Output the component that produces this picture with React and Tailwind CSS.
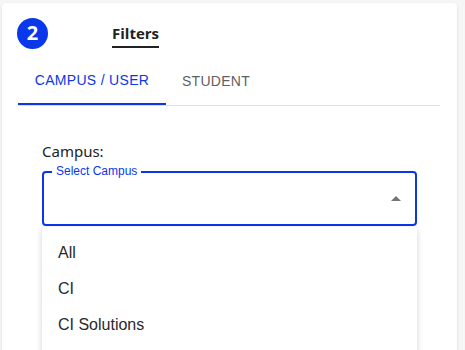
import React from 'react'

const BLUE = 'text-[#0a37ea]'

const options = ['All', 'CI', 'CI Solutions']

export default function App() {
  return (
    <div className="min-h-[350px] bg-[#f6f6f6] pt-[3px] pl-[2px] overflow-hidden">
      <div className="w-[455px] h-[400px] bg-white rounded-[4px] shadow-[0_1px_3px_rgba(0,0,0,0.12)] relative">
        {/* header */}
        <div className="flex items-center pt-[15px] pl-[15px] h-[45px]">
          <div className="w-[31px] h-[31px] rounded-full bg-[#0a37ea] flex items-center justify-center text-white font-bold text-[20px] leading-none [font-family:'Open_Sans',sans-serif]">
            2
          </div>
          <div className="ml-[64px] border-b-2 border-[#222] pb-[1px] mt-[3px]">
            <span className="font-bold text-[15px] text-[#222] [font-family:'Open_Sans',sans-serif] leading-[18px]">Filters</span>
          </div>
        </div>

        {/* tabs */}
        <div className="mt-[9px] ml-[16px] w-[422px] flex border-b border-[#e0e0e0] [font-family:'Liberation_Sans',Arial,sans-serif]">
          <div className={`w-[148px] h-[48px] flex items-center justify-center text-[14px] tracking-[0.3px] ${BLUE} border-b-2 border-[#0a37ea] -mb-px`}>
            CAMPUS / USER
          </div>
          <div className="w-[100px] h-[48px] flex items-center justify-center text-[14px] tracking-[0.3px] text-[#5f5f5f]">
            STUDENT
          </div>
        </div>

        {/* campus select */}
        <div className="pl-[40px] pt-[35px] w-[415px]">
          <div className="text-[15px] text-[#222] [font-family:'Noto_Sans',sans-serif] leading-[20px]">Campus:</div>
          <div className="relative mt-[10px] h-[55px] border-2 border-[#0a37ea] rounded-[4px] [font-family:'Liberation_Sans',Arial,sans-serif]">
            <span className={`absolute -top-[10px] left-[8px] px-[4px] bg-white text-[12px] leading-[16px] ${BLUE}`}>
              Select Campus
            </span>
            <svg className="absolute right-[14px] top-[23px]" width="10" height="5" viewBox="0 0 10 5">
              <path d="M0 5 L5 0 L10 5 Z" fill="#757575" />
            </svg>
          </div>

          {/* open menu */}
          <div className="relative">
            <div className="absolute top-[1px] left-0 w-[375px] h-[140px] bg-white rounded-[4px] shadow-[0_2px_6px_rgba(0,0,0,0.18)] py-[8px] [font-family:'Liberation_Sans',Arial,sans-serif]">
              {options.map((o) => (
                <div key={o} className="h-[36px] flex items-center pl-[16px] text-[16px] text-[#2a2a2a]">
                  {o}
                </div>
              ))}
            </div>
          </div>
        </div>
      </div>
    </div>
  )
}
